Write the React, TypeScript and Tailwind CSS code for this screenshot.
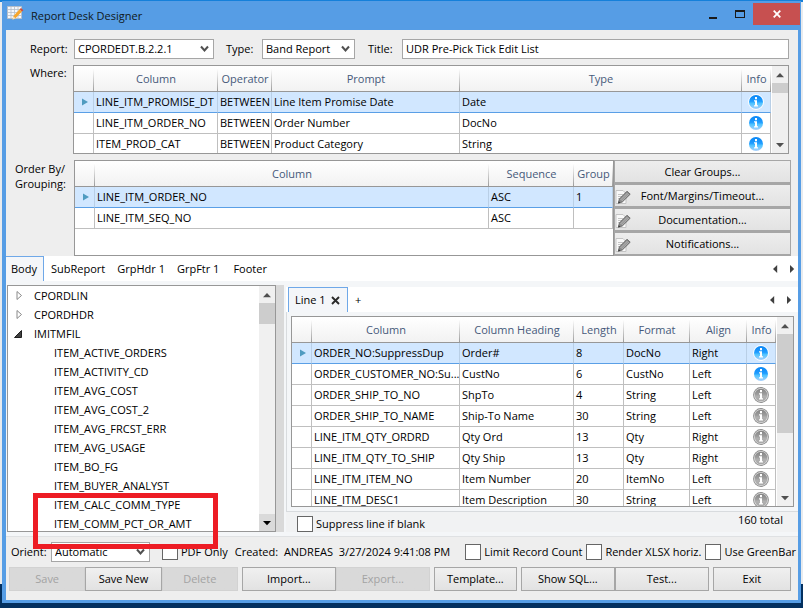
import React from "react";

type Column = { label: string; width?: string };

const headCell =
  "h-[26px] border-b border-[#979797] p-0 text-center font-normal text-[#46597a] bg-no-repeat bg-[linear-gradient(to_bottom,#ffffff_10%,#9c9c9c),linear-gradient(to_bottom,#ffffff,#f2f2f2)] [background-size:1px_100%,100%_100%] [background-position:right_top,left_top]";

function InfoIcon({ active }: { active: boolean }) {
  const id = active ? "info-blue" : "info-grey";
  return (
    <svg width="16" height="16" viewBox="0 0 16 16" className="mx-auto block" role="img" aria-label="Info">
      <defs>
        <linearGradient id={id} x1="0" y1="0" x2="0" y2="1">
          <stop offset="0" stopColor={active ? "#0a86f5" : "#858585"} />
          <stop offset="0.45" stopColor={active ? "#1f9cff" : "#9d9d9d"} />
          <stop offset="0.6" stopColor={active ? "#4fc3ff" : "#b0b0b0"} />
          <stop offset="1" stopColor={active ? "#a9d0fb" : "#a8a8a8"} />
        </linearGradient>
      </defs>
      <circle cx="8" cy="8" r="7.9" fill={active ? "#ffffff" : "#8a8a8a"} />
      {!active && <circle cx="8" cy="8" r="7" fill="#dedede" />}
      <circle cx="8" cy="8" r={active ? 7 : 6.3} fill={`url(#${id})`} />
      <path d="M7 3h2v2.200H7zM6 6.300h3v4.900h1v1.300H6v-1.300h1V7.600H6z" fill="#fff" />
    </svg>
  );
}

function Marker() {
  return (
    <svg width="6" height="8" viewBox="0 0 6 8" className="ml-2 block" aria-hidden="true">
      <path d="M0 0.5 6 4 0 7.5z" fill="#4f9bc0" />
    </svg>
  );
}

function Arrow({ dir, className = "" }: { dir: "up" | "down" | "left" | "right"; className?: string }) {
  const d = {
    up: "M0 6.200 4 2l4 4.200z",
    down: "M0 2h8L4 6.200z",
    left: "M6.200 0v8L2 4z",
    right: "M2 0v8L6.200 4z",
  }[dir];
  return (
    <svg width="8" height="8" viewBox="0 0 8 8" className={className} aria-hidden="true">
      <path d={d} fill="currentColor" />
    </svg>
  );
}

function ScrollBar({ thumb, dark = false }: { thumb: string; dark?: boolean }) {
  return (
    <div className="flex w-[17px] shrink-0 flex-col border-l border-white bg-[#f0f0f0] text-[#505050]">
      <button aria-label="Scroll up" className="flex h-[17px] shrink-0 items-center justify-center">
        <Arrow dir="up" />
      </button>
      <div className="flex-1">
        <div className={`bg-[#cdcdcd] ${thumb}`} />
      </div>
      <button
        aria-label="Scroll down"
        className={`flex h-[17px] shrink-0 items-center justify-center ${dark ? "bg-[#dadada] text-black" : ""}`}
      >
        <Arrow dir="down" />
      </button>
    </div>
  );
}

function Grid({
  label,
  columns,
  rows,
  info,
}: {
  label: string;
  columns: Column[];
  rows: string[][];
  info?: boolean[];
}) {
  return (
    <table aria-label={label} className="w-full table-fixed border-separate border-spacing-0">
      <colgroup>
        <col className="w-5" />
        {columns.map((c) => (
          <col key={c.label} className={c.width} />
        ))}
        {info && <col className="w-[29px]" />}
      </colgroup>
      <thead>
        <tr>
          <th className={headCell} aria-label="Selected" />
          {columns.map((c) => (
            <th key={c.label} className={headCell}>
              {c.label}
            </th>
          ))}
          {info && <th className={headCell}>Info</th>}
        </tr>
      </thead>
      <tbody>
        {rows.map((row, i) => {
          const cell =
            i === 0
              ? "h-[21px] border-r border-b border-r-[#b9cfe6] border-b-[#5a9fe6] bg-[#d1e7ff] py-0 leading-5"
              : "h-[21px] border-r border-b border-[#bfbfbf] bg-white py-0 leading-5";
          return (
            <tr key={row[0]}>
              <td className={`${cell} px-0`}>{i === 0 && <Marker />}</td>
              {row.map((v, k) => (
                <td key={k} className={`${cell} overflow-hidden pr-0 pl-[2px] whitespace-nowrap`}>
                  {v}
                </td>
              ))}
              {info && (
                <td className={`${cell} px-0`}>
                  <InfoIcon active={info[i]} />
                </td>
              )}
            </tr>
          );
        })}
      </tbody>
    </table>
  );
}

function Dropdown({ id, value, width }: { id: string; value: string; width: string }) {
  return (
    <div className={`relative h-5 shrink-0 ${width}`}>
      <select
        id={id}
        defaultValue={value}
        className="block h-5 w-full appearance-none border border-[#a6a6a6] bg-white pl-[3px] leading-4 outline-none"
      >
        <option>{value}</option>
      </select>
      <svg
        width="9"
        height="8"
        viewBox="0 0 9 8"
        className="pointer-events-none absolute top-[6px] right-[5px]"
        aria-hidden="true"
      >
        <path d="M1 1.500 4.500 5.500 8 1.500" fill="none" stroke="#505050" strokeWidth="2" />
      </svg>
    </div>
  );
}

function Check({ id, label, className = "" }: { id: string; label: string; className?: string }) {
  return (
    <div className={`flex shrink-0 items-center gap-[3px] ${className}`}>
      <input id={id} type="checkbox" className="size-4 shrink-0 appearance-none border border-[#666] bg-white" />
      <label htmlFor={id} className="whitespace-nowrap">
        {label}
      </label>
    </div>
  );
}

function NoteIcon() {
  return (
    <svg width="16" height="16" viewBox="0 0 16 16" className="shrink-0" aria-hidden="true">
      <path d="M1 1.500h7l3 3V14.500H1z" fill="#f8f8f8" stroke="#c4c4c4" />
      <path d="M3 5.500h5M3 7.500h4M3 9.500h2" stroke="#c4c4c4" />
      <path d="M12 2.200 15.200 5.200 7.300 13 3.300 14.300 4.300 10z" fill="#8a8a8a" stroke="#606060" strokeWidth="0.800" />
      <path d="M5.500 11 12.500 4M6.700 12 13.700 5" stroke="#d0d0d0" strokeWidth="0.700" />
      <path d="M3.300 14.300 3.800 12.300 5.300 13.700z" fill="#333" />
    </svg>
  );
}

function SideButton({ label, icon }: { label: string; icon?: boolean }) {
  return (
    <button className="flex h-6 w-full items-center border border-[#a6a6a6] bg-gradient-to-b from-[#ededed] to-[#e2e2e2] shadow-[inset_0_-1px_0_#a6a6a6]">
      <span className="w-4 shrink-0 pt-[2px]">{icon && <NoteIcon />}</span>
      <span className="flex-1 pr-4 text-center">{label}</span>
    </button>
  );
}

function FootButton({ label, disabled, className }: { label: string; disabled?: boolean; className: string }) {
  return (
    <button
      disabled={disabled}
      className={`h-6 min-w-0 border border-[#a6a6a6] bg-gradient-to-b from-[#f0f0f0] to-[#e2e2e2] text-black disabled:border-[#d2d2d2] disabled:from-[#d9d9d9] disabled:to-[#d9d9d9] disabled:text-[#a3a3a3] ${className}`}
    >
      {label}
    </button>
  );
}

function Pager({ className }: { className: string }) {
  return (
    <div className={`ml-auto flex items-center gap-[9px] text-[#404040] ${className}`}>
      <button aria-label="Previous tab">
        <Arrow dir="left" className="block" />
      </button>
      <button aria-label="Next tab">
        <Arrow dir="right" className="block" />
      </button>
    </div>
  );
}

const whereRows = [
  ["LINE_ITM_PROMISE_DT", "BETWEEN", "Line Item Promise Date", "Date"],
  ["LINE_ITM_ORDER_NO", "BETWEEN", "Order Number", "DocNo"],
  ["ITEM_PROD_CAT", "BETWEEN", "Product Category", "String"],
];

const orderRows = [
  ["LINE_ITM_ORDER_NO", "ASC", "1"],
  ["LINE_ITM_SEQ_NO", "ASC", ""],
];

const lineRows = [
  ["ORDER_NO:SuppressDup", "Order#", "8", "DocNo", "Right"],
  ["ORDER_CUSTOMER_NO:Su...", "CustNo", "6", "CustNo", "Left"],
  ["ORDER_SHIP_TO_NO", "ShpTo", "4", "String", "Left"],
  ["ORDER_SHIP_TO_NAME", "Ship-To Name", "30", "String", "Left"],
  ["LINE_ITM_QTY_ORDRD", "Qty Ord", "13", "Qty", "Right"],
  ["LINE_ITM_QTY_TO_SHIP", "Qty Ship", "13", "Qty", "Right"],
  ["LINE_ITM_ITEM_NO", "Item Number", "20", "ItemNo", "Left"],
  ["LINE_ITM_DESC1", "Item Description", "30", "String", "Left"],
];

const fields = [
  "ITEM_ACTIVE_ORDERS",
  "ITEM_ACTIVITY_CD",
  "ITEM_AVG_COST",
  "ITEM_AVG_COST_2",
  "ITEM_AVG_FRCST_ERR",
  "ITEM_AVG_USAGE",
  "ITEM_BO_FG",
  "ITEM_BUYER_ANALYST",
  "ITEM_CALC_COMM_TYPE",
  "ITEM_COMM_PCT_OR_AMT",
];

function TitleBar() {
  return (
    <header className="flex h-[29px] items-start pl-[5px]">
      <svg width="17" height="17" viewBox="0 0 17 17" className="mt-1" aria-hidden="true">
        <path d="M.500 1.500h14v12H.500z" fill="#f5f7fa" stroke="#b5bec9" />
        <path d="M.500 4.500h14M.500 7.500h14M.500 10.500h14M4 1.500v12M7.500 1.500v12M11 1.500v12" stroke="#b5bec9" strokeWidth="0.800" />
        <path d="M12.600 4.300 15 6.500 8.500 13.300 5.500 14.700 6.300 11.200z" fill="#f7a62c" />
        <path d="M12.600 4.300 14 3l2.400 2.200L15 6.500z" fill="#d0503c" />
        <path d="M5.500 14.700 6.300 11.200 8.500 13.300z" fill="#f3e2c0" />
      </svg>
      <h1 className="ml-[7px] leading-[29px] text-[#101820]">Report Desk Designer</h1>
      <div className="ml-auto flex pt-[2px] pr-px">
        <button aria-label="Minimize" className="flex h-[22px] w-[27px] items-center justify-center">
          <svg width="8" height="12" viewBox="0 0 8 12" aria-hidden="true">
            <path d="M0 9h8v2H0z" fill="#1a1a1a" />
          </svg>
        </button>
        <button aria-label="Maximize" className="flex h-[22px] w-[27px] items-center justify-center">
          <svg width="10" height="8" viewBox="0 0 10 8" aria-hidden="true">
            <path d="M0 0h10v8H0zM1 2v5h8V2z" fill="#1a1a1a" fillRule="evenodd" />
          </svg>
        </button>
        <button aria-label="Close" className="flex h-[22px] w-[47px] items-center justify-center bg-[#c75050]">
          <svg width="8" height="8" viewBox="0 0 8 8" aria-hidden="true">
            <path d="M.700.700l6.600 6.600M7.300.700.700 7.300" stroke="#fff" strokeWidth="1.800" />
          </svg>
        </button>
      </div>
    </header>
  );
}

export default function App() {
  return (
    <div className="min-h-screen bg-[linear-gradient(to_bottom,#1580da_2px,#e8ebee_2px,#e8ebee_calc(100%-24px),#03305f_calc(100%-24px))] px-[2px] pt-px pb-[5px] font-['Open_Sans','Noto_Sans',sans-serif] text-[11px] leading-4 text-black">
      <main className="bg-[#569de5] pb-[3px]">
        <TitleBar />
        <div className="ml-1 mr-[3px] bg-[#eeeeee] pt-[9px]">
          <div className="flex items-center pr-[9px]">
            <label htmlFor="report" className="w-[68px] shrink-0 pl-6">
              Report:
            </label>
            <Dropdown id="report" value="CPORDEDT.B.2.2.1" width="w-[140px]" />
            <label htmlFor="type" className="ml-3 w-9 shrink-0">
              Type:
            </label>
            <Dropdown id="type" value="Band Report" width="w-[93px]" />
            <label htmlFor="title" className="ml-[13px] w-[34px] shrink-0">
              Title:
            </label>
            <input
              id="title"
              defaultValue="UDR Pre-Pick Tick Edit List"
              className="h-5 min-w-0 flex-1 border border-[#a6a6a6] bg-white px-[3px] pb-px outline-none"
            />
          </div>

          <section className="mt-[6px] flex pr-[9px]">
            <h2 className="w-[67px] shrink-0 pl-6">Where:</h2>
            <div className="flex h-[89px] min-w-0 flex-1 overflow-hidden border border-[#979797] bg-white">
              <div className="min-w-0 flex-1">
                <Grid
                  label="Where"
                  columns={[
                    { label: "Column", width: "w-[124px]" },
                    { label: "Operator", width: "w-[54px]" },
                    { label: "Prompt", width: "w-[188px]" },
                    { label: "Type" },
                  ]}
                  rows={whereRows}
                  info={[true, true, true]}
                />
              </div>
              <ScrollBar thumb="h-[10px]" />
            </div>
          </section>

          <section className="mt-[6px] flex pr-[7px]">
            <h2 className="w-[68px] shrink-0 pt-px pl-[9px] leading-[15px]">
              Order By/
              <br />
              Grouping:
            </h2>
            <div className="h-24 min-w-0 flex-1 border border-[#979797] bg-white">
              <Grid
                label="Order by and grouping"
                columns={[{ label: "Column" }, { label: "Sequence", width: "w-[85px]" }, { label: "Group", width: "w-[39px]" }]}
                rows={orderRows}
              />
            </div>
            <div className="w-[177px] shrink-0">
              <SideButton label="Clear Groups..." />
              <SideButton label="Font/Margins/Timeout..." icon />
              <SideButton label="Documentation..." icon />
              <SideButton label="Notifications..." icon />
            </div>
          </section>

          <nav className="flex h-[25px] bg-white">
            <button className="border-t border-r border-[#6fa8e8] bg-[#f4f6f9] pr-[6px] pl-[5px]">Body</button>
            <button className="ml-[7px]">SubReport</button>
            <button className="ml-3">GrpHdr 1</button>
            <button className="ml-3">GrpFtr 1</button>
            <button className="ml-[14px]">Footer</button>
            <Pager className="pr-[2px]" />
          </nav>

          <div className="flex items-start border-b border-[#dfe1e3] bg-[#f4f6f8] pt-1 pb-1">
            <div className="relative ml-px flex h-[247px] w-[269px] shrink-0 border border-[#979797] bg-white">
              <ul className="min-w-0 flex-1 leading-[19px]">
                {["CPORDLIN", "CPORDHDR"].map((n) => (
                  <li key={n} className="flex items-center pl-2">
                    <svg width="7" height="9" viewBox="0 0 7 9" aria-hidden="true">
                      <path d="M1 0.500v8l4.500-4z" fill="#fff" stroke="#8a8a8a" />
                    </svg>
                    <span className="ml-[11px]">{n}</span>
                  </li>
                ))}
                <li>
                  <div className="flex items-center pl-[6px]">
                    <svg width="8" height="8" viewBox="0 0 8 8" aria-hidden="true">
                      <path d="M7.500.500v7h-7z" fill="#404040" stroke="#202020" />
                    </svg>
                    <span className="ml-3">IMITMFIL</span>
                  </div>
                  <ul className="pl-[46px]">
                    {fields.map((f) => (
                      <li key={f}>{f}</li>
                    ))}
                  </ul>
                </li>
              </ul>
              <ScrollBar thumb="h-[21px]" dark />
              <div className="pointer-events-none absolute top-[207px] left-[25px] z-10 h-[56px] w-[185px] border-[5px] border-[#ed1c24]" />
            </div>
            <div className="w-2 shrink-0 self-stretch bg-[#d9d9d9]" />

            <div className="ml-[2px] mt-[2px] min-w-0 flex-1">
              <div className="flex h-[25px] bg-white pl-[2px]">
                <button className="flex w-[60px] items-center justify-between border border-b-0 border-[#6fa8e8] bg-[#f4f6f9] pr-[7px] pl-[6px]">
                  Line 1
                  <svg width="9" height="9" viewBox="0 0 9 9" aria-hidden="true">
                    <path d="M1 1l7 7M8 1 1 8" stroke="#2a2a2a" strokeWidth="1.900" />
                  </svg>
                </button>
                <button aria-label="Add line" className="ml-[7px]">
                  +
                </button>
                <Pager className="pr-[5px]" />
              </div>
              <div className="border-b border-l border-[#d8dbde] pt-1 pr-1 pb-1 pl-1">
                <div className="flex h-[191px] overflow-hidden border border-[#979797] bg-white">
                  <div className="min-w-0 flex-1">
                    <Grid
                      label="Line columns"
                      columns={[
                        { label: "Column", width: "w-[148px]" },
                        { label: "Column Heading" },
                        { label: "Length", width: "w-[50px]" },
                        { label: "Format", width: "w-[66px]" },
                        { label: "Align", width: "w-[57px]" },
                      ]}
                      rows={lineRows}
                      info={[true, true, false, false, false, false, false, false]}
                    />
                  </div>
                  <ScrollBar thumb="h-[99px]" />
                </div>
              </div>
              <div className="flex items-center justify-between bg-[#f1f2f3] pr-[15px] pl-[11px]">
                <Check id="suppress" label="Suppress line if blank" className="mt-[3px]" />
                <span className="pb-1">160 total</span>
              </div>
            </div>
          </div>

          <div className="mt-[5px] flex h-5 items-center pr-[2px] pl-[5px]">
            <label htmlFor="orient" className="w-10 shrink-0">
              Orient:
            </label>
            <Dropdown id="orient" value="Automatic" width="w-[99px]" />
            <Check id="pdf" label="PDF Only" className="ml-3" />
            <span className="ml-[7px] whitespace-pre">Created:  ANDREAS  3/27/2024 9:41:08 PM</span>
            <div className="ml-auto flex gap-1">
              <Check id="limit" label="Limit Record Count" />
              <Check id="xlsx" label="Render XLSX horiz." />
              <Check id="greenbar" label="Use GreenBar" />
            </div>
          </div>

          <footer className="mt-[5px] flex pr-[7px] pb-[9px] pl-[3px]">
            <FootButton label="Save" disabled className="flex-[76]" />
            <FootButton label="Save New" className="flex-[76]" />
            <FootButton label="Delete" disabled className="mr-1 flex-[76]" />
            <FootButton label="Import..." className="flex-[94]" />
            <FootButton label="Export..." disabled className="mr-1 flex-[94]" />
            <FootButton label="Template..." className="mr-1 flex-[83]" />
            <FootButton label="Show SQL..." className="flex-[94]" />
            <FootButton label="Test..." className="mr-1 flex-[94]" />
            <FootButton label="Exit" className="flex-[78]" />
          </footer>
        </div>
      </main>
    </div>
  );
}
